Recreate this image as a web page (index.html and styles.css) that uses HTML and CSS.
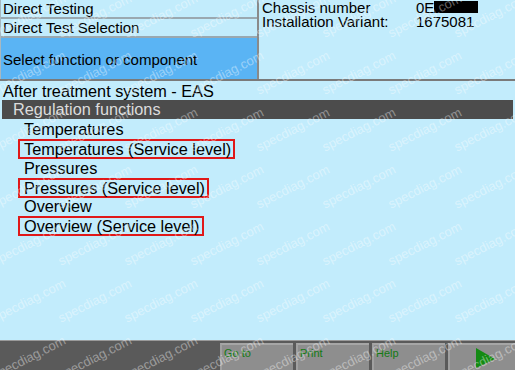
FILE: index.html
```html
<!DOCTYPE html>
<html lang="en">
<head>
<meta charset="UTF-8">
<title>Direct Testing</title>
<link rel="stylesheet" href="styles.css">
</head>
<body>
<div class="screen">
  <div class="header">
    <div class="nav">
      <div class="nav-row">Direct Testing</div>
      <div class="nav-row">Direct Test Selection</div>
      <div class="nav-row selected">Select function or component</div>
    </div>
    <div class="info">
      <div class="info-row"><span class="info-label">Chassis number</span><span class="info-value">0E<span class="redacted"></span></span></div>
      <div class="info-row"><span class="info-label">Installation Variant:</span><span class="info-value">1675081</span></div>
    </div>
  </div>

  <div class="tree">
    <div class="tree-title">After treatment system - EAS</div>
    <div class="tree-group">Regulation functions</div>
    <div class="tree-item">Temperatures</div>
    <div class="tree-item"><span class="marked">Temperatures (Service level)</span></div>
    <div class="tree-item">Pressures</div>
    <div class="tree-item"><span class="marked">Pressures (Service level)</span></div>
    <div class="tree-item">Overview</div>
    <div class="tree-item"><span class="marked">Overview (Service level)</span></div>
  </div>

  <div class="footer">
    <div class="footer-space"></div>
    <div class="fkey">Go to</div>
    <div class="fkey">Print</div>
    <div class="fkey">Help</div>
    <div class="fkey next">
      <svg width="24" height="20" viewBox="0 0 24 20"><polygon points="3,0 22,11 3,20" fill="#138a13"/></svg>
    </div>
  </div>

  <div class="watermark">
    <span>specdiag.com</span><span>specdiag.com</span><span>specdiag.com</span><span>specdiag.com</span><span>specdiag.com</span><span>specdiag.com</span><span>specdiag.com</span><span>specdiag.com</span>
    <span>specdiag.com</span><span>specdiag.com</span><span>specdiag.com</span><span>specdiag.com</span><span>specdiag.com</span><span>specdiag.com</span><span>specdiag.com</span><span>specdiag.com</span>
    <span>specdiag.com</span><span>specdiag.com</span><span>specdiag.com</span><span>specdiag.com</span><span>specdiag.com</span><span>specdiag.com</span><span>specdiag.com</span><span>specdiag.com</span>
    <span>specdiag.com</span><span>specdiag.com</span><span>specdiag.com</span><span>specdiag.com</span><span>specdiag.com</span><span>specdiag.com</span><span>specdiag.com</span><span>specdiag.com</span>
    <span>specdiag.com</span><span>specdiag.com</span><span>specdiag.com</span><span>specdiag.com</span><span>specdiag.com</span><span>specdiag.com</span><span>specdiag.com</span><span>specdiag.com</span>
    <span>specdiag.com</span><span>specdiag.com</span><span>specdiag.com</span><span>specdiag.com</span><span>specdiag.com</span><span>specdiag.com</span><span>specdiag.com</span><span>specdiag.com</span>
    <span>specdiag.com</span><span>specdiag.com</span><span>specdiag.com</span><span>specdiag.com</span><span>specdiag.com</span><span>specdiag.com</span><span>specdiag.com</span><span>specdiag.com</span>
  </div>
</div>
</body>
</html>
```

FILE: styles.css
```css
body {
  margin: 0;
  padding: 0;
  font-family: "Liberation Sans", Arial, sans-serif;
  background: #c2ecfc;
  color: #000;
}

.screen {
  position: relative;
  width: 515px;
  height: 370px;
  overflow: hidden;
  display: flex;
  flex-direction: column;
}

.header {
  display: flex;
  height: 79px;
  border-bottom: 2px solid #7a7a7a;
}

.nav {
  width: 256px;
  display: flex;
  flex-direction: column;
  border-right: 2px solid #8a8a8a;
  border-left: 1px solid #a8b8c0;
}

.nav-row {
  height: 17px;
  line-height: 17px;
  font-size: 15px;
  padding-left: 2px;
  border-bottom: 2px solid #9aa8b0;
}

.nav-row.selected {
  flex: 1;
  background: #5ab4f4;
  border-bottom: none;
  display: flex;
  align-items: center;
  padding-top: 1px;
}

.info {
  flex: 1;
  padding: 1px 0 0 3px;
}

.info-row {
  display: flex;
  height: 14px;
  line-height: 14px;
  font-size: 15px;
}

.info-label {
  width: 154px;
}

.info-value {
  display: flex;
}

.redacted {
  width: 44px;
  height: 12px;
  background: #000;
}

.tree {
  flex: 1;
  display: flex;
  flex-direction: column;
  padding: 1px 2px 0 2px;
  font-size: 16.3px;
}

.tree-title {
  height: 18px;
  line-height: 18px;
  padding-left: 1px;
}

.tree-group {
  height: 19px;
  line-height: 19px;
  background: #4c4c4c;
  color: #dcdcdc;
  padding-left: 11px;
  margin-bottom: 1px;
}

.tree-item {
  height: 19.3px;
  line-height: 19px;
  padding-left: 22px;
}

.marked {
  display: inline-block;
  border: 2px solid #e01818;
  padding: 0 2px 0 4px;
  margin-left: -6px;
  line-height: 16px;
}

.footer {
  height: 29px;
  display: flex;
  background: #5a5a5a;
  border-top: 1px solid #9a9a9a;
}

.footer-space {
  width: 220px;
}

.fkey {
  width: 69px;
  margin: 2px 3px 0 0;
  background: #8e8e8e;
  border-top: 2px solid #a6a6a6;
  border-left: 2px solid #a0a0a0;
  color: #137a13;
  font-size: 11px;
  padding: 2px 0 0 2px;
}

.fkey.next {
  flex: 1;
  margin-right: 0;
  display: flex;
  justify-content: center;
  align-items: flex-end;
  padding: 0 0 2px 4px;
}

/* watermark overlay of the source screenshot */
.watermark {
  position: absolute;
  left: -1px;
  top: 9px;
  display: grid;
  grid-template-columns: repeat(8, 66px);
  grid-auto-rows: 57px;
  pointer-events: none;
}

.watermark span {
  font-size: 13px;
  color: rgba(255, 255, 255, 0.4);
  transform: rotate(-27deg);
  white-space: nowrap;
}
```
